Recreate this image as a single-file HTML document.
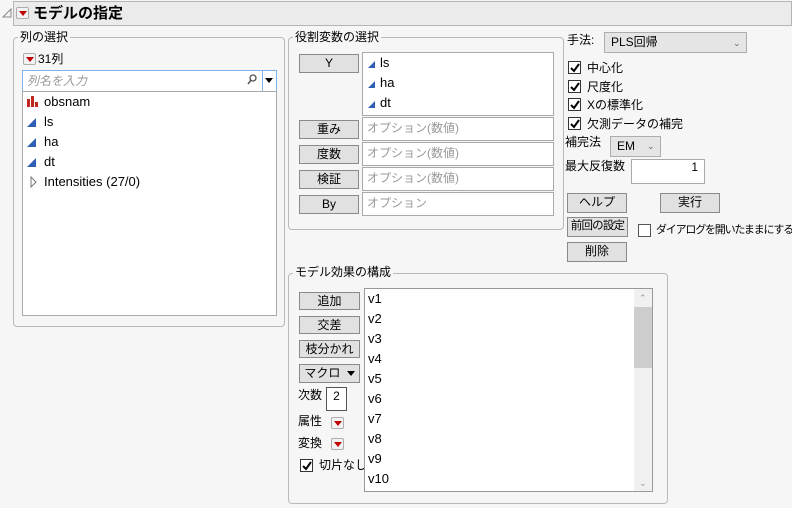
<!DOCTYPE html>
<html><head><meta charset="utf-8"><style>
*{box-sizing:border-box;margin:0;padding:0}
body{width:792px;height:508px;background:#f6f6f6;font-family:"Liberation Sans","Noto Sans CJK JP",sans-serif;font-size:12px;color:#000;position:relative;overflow:hidden}
.a{position:absolute}
.grp{position:absolute;border:1px solid #b9b9b9;border-radius:4px}
.leg{position:absolute;background:#f6f6f6;padding:0 2px;font-size:12px;line-height:14px}
.btn{position:absolute;background:#e1e1e1;border:1px solid #8a8a8a;text-align:center;font-size:12px;line-height:16px;white-space:nowrap;overflow:hidden}
.box{position:absolute;background:#fff;border:1px solid #a9a9a9}
.ph{color:#999;padding-left:4px;line-height:20px}
.rb{position:absolute;width:13px;height:12px;border:1px solid #adadad;border-radius:2px;background:#f3f3f3}
.rb:after{content:"";position:absolute;left:2px;top:3px;border-left:4px solid transparent;border-right:4px solid transparent;border-top:5px solid #c00000}
.cb{position:absolute;width:13px;height:13px;border:1px solid #333;background:#fff}
.cb svg{position:absolute;left:0;top:0}
.t{position:absolute;line-height:14px;white-space:nowrap}
.tri{display:inline-block;width:0;height:0;border-left:9px solid transparent;border-bottom:9px solid #2f5fb5;vertical-align:-1px}
.trs{display:inline-block;width:0;height:0;border-left:7px solid transparent;border-bottom:7px solid #2f5fb5}
</style></head><body>
<svg class="a" style="left:2px;top:8px" width="10" height="10"><path d="M1 9 L9 1 L9 9 Z" fill="none" stroke="#888"/></svg>
<div class="a" style="left:13px;top:1px;width:779px;height:25px;background:#ebebeb;border:1px solid #b5b5b5"></div>
<div class="rb" style="left:16px;top:7px"></div>
<div class="t" style="left:33px;top:5px;font-size:15px;font-weight:bold;line-height:17px">モデルの指定</div>

<div class="grp" style="left:13px;top:37px;width:272px;height:290px"></div>
<div class="leg" style="left:18px;top:30px">列の選択</div>
<div class="rb" style="left:23px;top:53px"></div>
<div class="t" style="left:38px;top:52px">31列</div>
<div class="box" style="left:22px;top:70px;width:255px;height:22px;border-color:#7eb4ea"></div>
<div class="t" style="left:27px;top:74px;color:#999;font-style:italic">列名を入力</div>
<svg class="a" style="left:247px;top:74px" width="10" height="12"><circle cx="6" cy="4" r="3" fill="none" stroke="#555" stroke-width="1.3"/><path d="M4 6 L1 10" stroke="#555" stroke-width="1.5"/></svg>
<div class="a" style="left:262px;top:71px;width:1px;height:20px;background:#7eb4ea"></div>
<div class="a" style="left:265px;top:78px;border-left:4px solid transparent;border-right:4px solid transparent;border-top:5px solid #000"></div>
<div class="box" style="left:22px;top:91px;width:255px;height:225px"></div>
<svg class="a" style="left:27px;top:96px" width="12" height="11"><rect x="0" y="3" width="3" height="8" fill="#c0281c"/><rect x="4" y="0" width="3" height="11" fill="#c0281c"/><rect x="8" y="6" width="3" height="5" fill="#c0281c"/></svg>
<div class="t" style="left:44px;top:95px;font-size:13px">obsnam</div>
<div class="t" style="left:27px;top:115px"><span class="tri"></span></div><div class="t" style="left:44px;top:115px;font-size:13px">ls</div>
<div class="t" style="left:27px;top:135px"><span class="tri"></span></div><div class="t" style="left:44px;top:135px;font-size:13px">ha</div>
<div class="t" style="left:27px;top:155px"><span class="tri"></span></div><div class="t" style="left:44px;top:155px;font-size:13px">dt</div>
<svg class="a" style="left:30px;top:176px" width="8" height="12"><path d="M1 1 L6 6 L1 11 Z" fill="none" stroke="#777"/></svg>
<div class="t" style="left:44px;top:175px;font-size:13px">Intensities (27/0)</div>

<div class="grp" style="left:288px;top:37px;width:276px;height:193px"></div>
<div class="leg" style="left:293px;top:30px">役割変数の選択</div>
<div class="btn" style="left:299px;top:54px;width:60px;height:19px">Y</div>
<div class="box" style="left:362px;top:52px;width:192px;height:64px"></div>
<div class="t" style="left:368px;top:57px"><span class="trs"></span></div><div class="t" style="left:380px;top:56px;font-size:13px">ls</div>
<div class="t" style="left:368px;top:77px"><span class="trs"></span></div><div class="t" style="left:380px;top:76px;font-size:13px">ha</div>
<div class="t" style="left:368px;top:97px"><span class="trs"></span></div><div class="t" style="left:380px;top:96px;font-size:13px">dt</div>
<div class="btn" style="left:299px;top:120px;width:60px;height:19px">重み</div>
<div class="box ph" style="left:362px;top:117px;width:192px;height:24px">オプション(数値)</div>
<div class="btn" style="left:299px;top:145px;width:60px;height:19px">度数</div>
<div class="box ph" style="left:362px;top:142px;width:192px;height:24px">オプション(数値)</div>
<div class="btn" style="left:299px;top:170px;width:60px;height:19px">検証</div>
<div class="box ph" style="left:362px;top:167px;width:192px;height:24px">オプション(数値)</div>
<div class="btn" style="left:299px;top:195px;width:60px;height:19px">By</div>
<div class="box ph" style="left:362px;top:192px;width:192px;height:24px">オプション</div>

<div class="t" style="left:567px;top:33px">手法:</div>
<div class="a" style="left:604px;top:32px;width:143px;height:21px;background:#e5e5e5;border:1px solid #adadad;padding-left:6px;line-height:19px">PLS回帰</div>
<div class="t" style="left:733px;top:36px;font-size:9px;color:#666">&#8964;</div>
<div class="cb" style="left:568px;top:61px"><svg width="12" height="12"><path d="M2 6 L5 9 L10 2" fill="none" stroke="#000" stroke-width="2"/></svg></div><div class="t" style="left:587px;top:61px">中心化</div>
<div class="cb" style="left:568px;top:80px"><svg width="12" height="12"><path d="M2 6 L5 9 L10 2" fill="none" stroke="#000" stroke-width="2"/></svg></div><div class="t" style="left:587px;top:80px">尺度化</div>
<div class="cb" style="left:568px;top:98px"><svg width="12" height="12"><path d="M2 6 L5 9 L10 2" fill="none" stroke="#000" stroke-width="2"/></svg></div><div class="t" style="left:587px;top:98px">Xの標準化</div>
<div class="cb" style="left:568px;top:117px"><svg width="12" height="12"><path d="M2 6 L5 9 L10 2" fill="none" stroke="#000" stroke-width="2"/></svg></div><div class="t" style="left:587px;top:117px">欠測データの補完</div>
<div class="t" style="left:565px;top:135px">補完法</div>
<div class="a" style="left:610px;top:136px;width:51px;height:21px;background:#e5e5e5;border:1px solid #adadad;padding-left:6px;line-height:19px">EM</div>
<div class="t" style="left:647px;top:139px;font-size:9px;color:#666">&#8964;</div>
<div class="t" style="left:565px;top:159px">最大反復数</div>
<div class="box" style="left:631px;top:159px;width:74px;height:25px;text-align:right;padding-right:6px;line-height:14px">1</div>
<div class="btn" style="left:567px;top:193px;width:60px;height:20px">ヘルプ</div>
<div class="btn" style="left:660px;top:193px;width:60px;height:20px">実行</div>
<div class="btn" style="left:567px;top:217px;width:61px;height:20px;letter-spacing:-0.8px;font-size:11.5px">前回の設定</div>
<div class="cb" style="left:638px;top:224px;border-color:#555"></div>
<div class="t" style="left:656px;top:223px;font-size:11px;letter-spacing:-1.2px">ダイアログを開いたままにする</div>
<div class="btn" style="left:567px;top:242px;width:60px;height:20px">削除</div>

<div class="grp" style="left:288px;top:273px;width:380px;height:231px"></div>
<div class="leg" style="left:293px;top:265px">モデル効果の構成</div>
<div class="btn" style="left:299px;top:292px;width:61px;height:18px">追加</div>
<div class="btn" style="left:299px;top:316px;width:61px;height:18px">交差</div>
<div class="btn" style="left:299px;top:340px;width:61px;height:18px">枝分かれ</div>
<div class="btn" style="left:299px;top:364px;width:61px;height:19px">マクロ <span style="display:inline-block;border-left:4px solid transparent;border-right:4px solid transparent;border-top:5px solid #000;vertical-align:1px;margin-left:3px"></span></div>
<div class="t" style="left:298px;top:388px">次数</div>
<div class="box" style="left:326px;top:387px;width:21px;height:24px;text-align:center;line-height:16px;border-color:#555">2</div>
<div class="t" style="left:298px;top:414px">属性</div>
<div class="rb" style="left:331px;top:417px"></div>
<div class="t" style="left:298px;top:436px">変換</div>
<div class="rb" style="left:331px;top:438px"></div>
<div class="cb" style="left:300px;top:459px"><svg width="12" height="12"><path d="M2 6 L5 9 L10 2" fill="none" stroke="#000" stroke-width="2"/></svg></div>
<div class="t" style="left:319px;top:458px">切片なし</div>
<div class="box" style="left:364px;top:288px;width:289px;height:204px;border-color:#999"></div>
<div class="a" style="left:634px;top:289px;width:18px;height:202px;background:#f0f0f0"></div>
<div class="a" style="left:634px;top:307px;width:18px;height:61px;background:#cdcdcd"></div>
<div class="t" style="left:639px;top:291px;font-size:9px;color:#999">&#8963;</div>
<div class="t" style="left:639px;top:476px;font-size:9px;color:#999">&#8964;</div>
<div class="t" style="left:368px;top:292px;font-size:13px">v1</div>
<div class="t" style="left:368px;top:312px;font-size:13px">v2</div>
<div class="t" style="left:368px;top:332px;font-size:13px">v3</div>
<div class="t" style="left:368px;top:352px;font-size:13px">v4</div>
<div class="t" style="left:368px;top:372px;font-size:13px">v5</div>
<div class="t" style="left:368px;top:392px;font-size:13px">v6</div>
<div class="t" style="left:368px;top:412px;font-size:13px">v7</div>
<div class="t" style="left:368px;top:432px;font-size:13px">v8</div>
<div class="t" style="left:368px;top:452px;font-size:13px">v9</div>
<div class="t" style="left:368px;top:472px;font-size:13px">v10</div>
</body></html>
